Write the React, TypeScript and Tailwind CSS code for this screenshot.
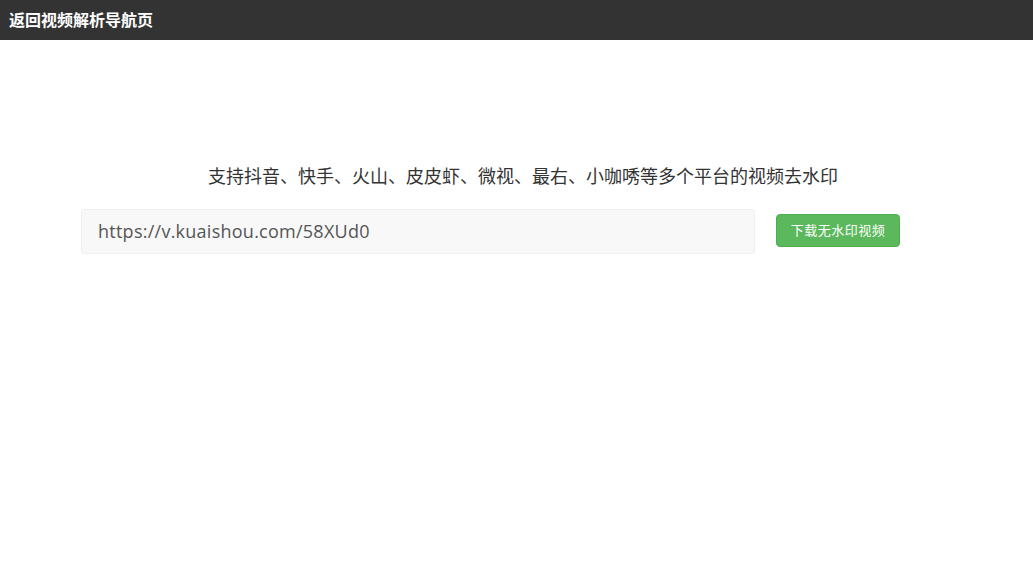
export default function App() {
  const cjk = { fontFamily: '"Open Sans", "Noto Sans CJK SC", sans-serif' };
  return (
    <div className="min-h-[583px] bg-white" style={cjk}>
      <div className="h-10 bg-[#333333] flex items-center pl-[9px]">
        <span className="text-white text-[16px] font-bold">返回视频解析导航页</span>
      </div>
      <div className="pt-[124px]">
        <h2 className="text-center pl-[13px] text-[18px] leading-[24px] text-[#333] font-normal">
          支持抖音、快手、火山、皮皮虾、微视、最右、小咖唀等多个平台的视频去水印
        </h2>
        <div className="flex items-start mt-[21px] pl-[81px] gap-[21px]">
          <div className="w-[674px] h-[45px] bg-[#f8f8f8] border border-[#f0f0f0] rounded-[3px] flex items-center pl-[16px]">
            <span className="text-[18px] tracking-[0.25px] text-[#555]">https://v.kuaishou.com/58XUd0</span>
          </div>
          <button className="mt-[5px] w-[124px] h-[33px] bg-[#5cb85c] rounded-[4px] text-white text-[13px] tracking-[0.5px] border border-[#4cae4c]">
            下载无水印视频
          </button>
        </div>
      </div>
    </div>
  );
}
